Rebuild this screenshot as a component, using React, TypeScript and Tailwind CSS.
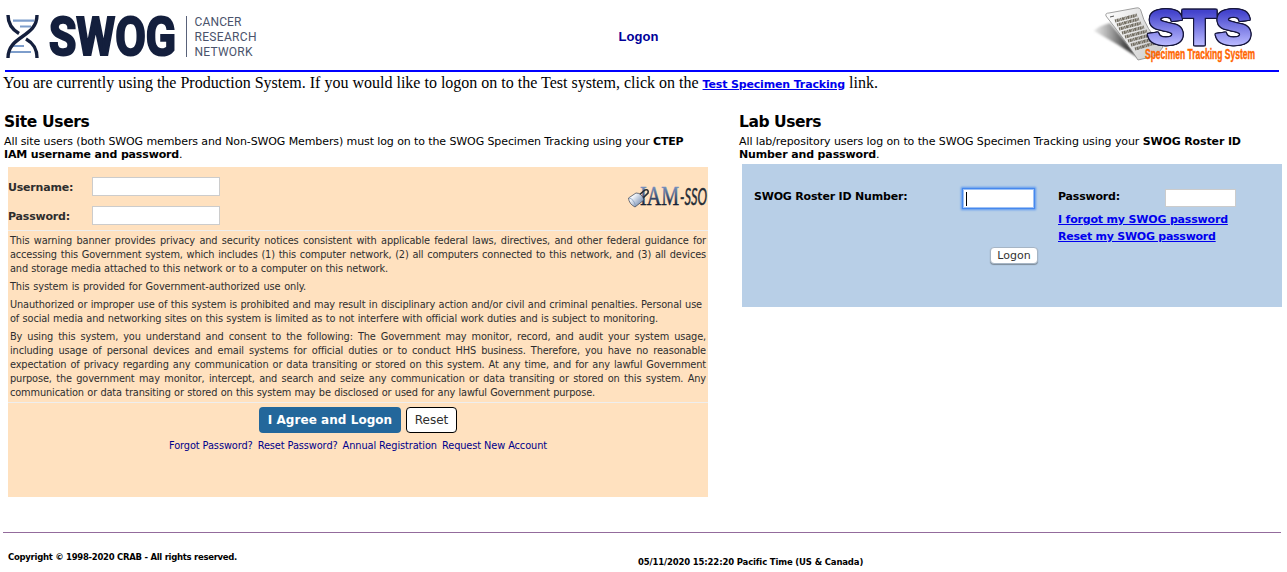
import React from "react";

const verdana = "font-['DejaVu_Sans',sans-serif]";

function SwogLogo() {
  return (
    <svg className="block h-[60px] w-[260px] overflow-visible" viewBox="0 0 260 60" role="img" aria-label="SWOG Cancer Research Network">
      <g stroke="#7d9dcb" strokeWidth="2.2">
        <path d="M13 20.7H34M20 26.5H31M12 46H24M9 52H31" />
      </g>
      <g fill="none" stroke="#141f3d" strokeWidth="3.4">
        <path d="M37 15C37 38 8 35 8 58" />
        <path d="M8 15C8 25 13 30 19 33.5M26 39C33 43 37 48 37 58" />
      </g>
      <text x="49" y="55.3" textLength="127" lengthAdjust="spacingAndGlyphs" fill="#141f3d" stroke="#141f3d" strokeWidth="2.2" className="font-['Roboto',sans-serif] text-[53px] font-bold">
        SWOG
      </text>
      <path d="M186.5 16V57" stroke="#59627a" strokeWidth="1" />
      <g fill="#4a536c" className="font-['Roboto',sans-serif] text-[12px]">
        <text x="194.5" y="26" textLength="47">CANCER</text>
        <text x="194.5" y="41" textLength="62">RESEARCH</text>
        <text x="194.5" y="55.5" textLength="58">NETWORK</text>
      </g>
    </svg>
  );
}

function StsLogo() {
  return (
    <svg className="block h-[65px] w-[167px] overflow-visible" viewBox="1090 0 167 65" role="img" aria-label="Specimen Tracking System">
      <defs>
        <linearGradient id="sts" gradientUnits="userSpaceOnUse" x1="0" y1="10" x2="0" y2="45">
          <stop offset="0.05" stopColor="#4343cc" />
          <stop offset="1" stopColor="#b9b9ff" />
        </linearGradient>
        <linearGradient id="paper" x1="0" y1="0" x2="1" y2="0.3">
          <stop offset="0" stopColor="#fff" />
          <stop offset="1" stopColor="#d0d0d0" />
        </linearGradient>
        <linearGradient id="shade" x1="0" y1="0" x2="1" y2="0">
          <stop offset="0" stopColor="#888" stopOpacity="0.2" />
          <stop offset="0.7" stopColor="#444" />
        </linearGradient>
      </defs>
      <path d="M1094 31Q1098 26 1110 23L1140 59Q1118 44 1094 31Z" fill="url(#shade)" className="blur-[1px]" />
      <path d="M1106 16Q1105 13 1109 13L1136 8Q1140 7 1141 11Q1145 28 1163 47L1157 55Q1148 58 1138 60Q1128 44 1106 16Z" fill="url(#paper)" stroke="#888" strokeWidth="0.8" />
      <path d="M1110 17l4-1" stroke="#555" strokeWidth="1" />
      <g stroke="#706b5f" strokeWidth="3.1" strokeDasharray="1.3 0.5 2 0.4 0.8 0.5">
        <path d="M1115 21L1137 15M1117 25L1139 19M1119 29L1141 23M1122 33L1144 27M1125 37L1147 31M1128 41L1150 35M1131 45L1153 39M1135 49L1155 43" />
      </g>
      <text x="1148" y="43.5" textLength="103" lengthAdjust="spacingAndGlyphs" fill="url(#sts)" stroke="url(#sts)" strokeWidth="2.6" className="font-['Liberation_Sans',sans-serif] text-[48px] font-bold [filter:drop-shadow(1px_0_0_#15153c)_drop-shadow(-1px_0_0_#15153c)_drop-shadow(0_1px_0_#15153c)_drop-shadow(0_-1px_0_#15153c)]">STS</text>
      <text x="1145" y="59" textLength="110" lengthAdjust="spacingAndGlyphs" fill="#ff6500" stroke="#ff6500" strokeWidth="0.4" className="font-['Liberation_Sans',sans-serif] text-[14.5px] font-bold">
        Specimen Tracking System
      </text>
    </svg>
  );
}

function IamLogo() {
  return (
    <svg className="block h-[26px] w-[81px] overflow-visible" viewBox="627 184 81 26" role="img" aria-label="IAM-SSO">
      <defs>
        <linearGradient id="iam" gradientUnits="userSpaceOnUse" x1="0" y1="187" x2="0" y2="206">
          <stop offset="0" stopColor="#7790bd" />
          <stop offset="0.5" stopColor="#42557b" />
          <stop offset="1" stopColor="#10192a" />
        </linearGradient>
        <linearGradient id="lock" x1="0" y1="0" x2="1" y2="0.8">
          <stop offset="0.3" stopColor="#f4f7fb" />
          <stop offset="1" stopColor="#637da5" />
        </linearGradient>
      </defs>
      <text x="640" y="205" textLength="39" lengthAdjust="spacingAndGlyphs" fill="url(#iam)" stroke="url(#iam)" strokeWidth="0.5" className="font-['Liberation_Serif',serif] text-[27px]">IAM</text>
      <text x="680" y="205" textLength="27" lengthAdjust="spacingAndGlyphs" fill="#252d37" stroke="#252d37" strokeWidth="0.5" className="font-['Lato',sans-serif] text-[24px] italic">-SSO</text>
      <path d="M638 196L645 190Q649 189 648 193L641 200" fill="none" stroke="#252a32" strokeWidth="1.6" />
      <path d="M628.5 198L636 193Q642 193 644 200L635 207Q629 204 628.5 198Z" fill="url(#lock)" stroke="#303b4d" strokeWidth="0.7" />
      <path d="M629 198Q634 199 635.5 206" fill="none" stroke="#819abd" strokeWidth="0.8" />
    </svg>
  );
}

const warning: { lines: string[]; widths: string[] }[] = [
  {
    lines: [
      "This warning banner provides privacy and security notices consistent with applicable federal laws, directives, and other federal guidance for",
      "accessing this Government system, which includes (1) this computer network, (2) all computers connected to this network, and (3) all devices",
      "and storage media attached to this network or to a computer on this network.",
    ],
    widths: ["w-[696px]", "w-[696px]", "w-[378px]"],
  },
  { lines: ["This system is provided for Government-authorized use only."], widths: ["w-[296px]"] },
  {
    lines: [
      "Unauthorized or improper use of this system is prohibited and may result in disciplinary action and/or civil and criminal penalties. Personal use",
      "of social media and networking sites on this system is limited as to not interfere with official work duties and is subject to monitoring.",
    ],
    widths: ["w-[692px]", "w-[648px]"],
  },
  {
    lines: [
      "By using this system, you understand and consent to the following: The Government may monitor, record, and audit your system usage,",
      "including usage of personal devices and email systems for official duties or to conduct HHS business. Therefore, you have no reasonable",
      "expectation of privacy regarding any communication or data transiting or stored on this system. At any time, and for any lawful Government",
      "purpose, the government may monitor, intercept, and search and seize any communication or data transiting or stored on this system. Any",
      "communication or data transiting or stored on this system may be disclosed or used for any lawful Government purpose.",
    ],
    widths: ["w-[696px]", "w-[696px]", "w-[696px]", "w-[696px]", "w-[585px]"],
  },
];

function SiteUsers() {
  return (
    <section className="w-[704px] shrink-0 pl-1">
      <h2 className="h-[23px] text-[15.5px] leading-[23px] font-bold tracking-[-0.35px]">Site Users</h2>
      <p className="mt-px h-[32px] text-[11px] leading-[13px] whitespace-nowrap">
        <span className="tracking-[-0.1px]">All site users (both SWOG members and Non-SWOG Members) must log on to the SWOG Specimen Tracking using your </span>
        <b className="tracking-[-0.25px]">CTEP</b><br /><b className="tracking-[-0.16px]">IAM username and password</b>.
      </p>
      <div className="ml-1 h-[330px] w-[700px] bg-[#ffe1bf] text-[#2e2e2e]">
        <div className="flex h-[63px] justify-between">
          <div className="pt-[10px] text-[11px] font-bold tracking-[-0.2px]">
            <label className="flex h-[29px] items-start">
              <span className="w-[84px] pt-[3px]">Username:</span>
              <input className="h-[19px] w-[128px] border border-[#ccc] bg-white outline-none" />
            </label>
            <label className="flex h-[20px] items-start">
              <span className="w-[84px] pt-[3px]">Password:</span>
              <input type="password" className="h-[19px] w-[128px] border border-[#ccc] bg-white outline-none" />
            </label>
          </div>
          <div className="pt-[17px]"><IamLogo /></div>
        </div>
        <div className="flex h-[173px] flex-col gap-1 border-y border-[#eee] pt-[3px] pl-[2px] text-[9.8px] leading-[14px] tracking-[-0.14px]">
          {warning.map((p) => (
            <div key={p.lines[0]}>
              {p.lines.map((line, i) => (
                <p key={line} className={`${p.widths[i]} h-[14px] whitespace-nowrap [text-align-last:justify]`}>{line}</p>
              ))}
            </div>
          ))}
        </div>
        <div className="flex justify-center gap-[5px] pt-1">
          <button className="h-[26px] w-[142px] rounded-[4px] bg-[#23679b] text-[12px] font-bold tracking-[0.05px] whitespace-nowrap text-white">I Agree and Logon</button>
          <button className="h-[26px] w-[51px] rounded-[4px] border border-black bg-white text-[12px]">Reset</button>
        </div>
        <nav className="mt-[6px] ml-[161px] flex w-[378px] justify-between text-[9.8px] leading-[14px] tracking-[-0.1px] whitespace-nowrap text-[#00008b]">
          <a>Forgot Password?</a><a>Reset Password?</a><a>Annual Registration</a><a>Request New Account</a>
        </nav>
      </div>
    </section>
  );
}

function LabUsers() {
  return (
    <section className="w-[544px] shrink-0">
      <h2 className="h-[23px] text-[15.5px] leading-[23px] font-bold tracking-[-0.45px]">Lab Users</h2>
      <p className="mt-px h-[29px] text-[11px] leading-[13px] whitespace-nowrap">
        <span className="tracking-[-0.095px]">All lab/repository users log on to the SWOG Specimen Tracking using your </span>
        <b className="tracking-[-0.13px]">SWOG Roster ID<br />Number and password</b>.
      </p>
      <div className="ml-[3px] h-[143px] w-[540px] bg-[#b8cfe7] pt-[24px] pl-[12px] text-[11px] font-bold">
        <div className="flex h-[59px] items-start">
          <label className="w-[210px] pt-[2px] leading-[14px] tracking-[-0.19px]">SWOG Roster ID Number:</label>
          <div className="mt-[2px] flex h-[17px] w-[69px] items-center bg-white pl-[2px] shadow-[0_0_0_1px_#9fc2f5,0_0_0_2px_#4688ee,0_0_2px_3px_#5b98ef]">
            <span className="h-[14px] w-px bg-black" />
          </div>
          <div className="ml-[25px] w-[200px]">
            <div className="flex h-[23px] items-start">
              <label className="w-[107px] pt-[2px] leading-[14px] tracking-[-0.19px]">Password:</label>
              <input type="password" className="mt-px h-[18px] w-[71px] border border-[#ccc] bg-white outline-none" />
            </div>
            <div className="flex flex-col leading-[17px] tracking-[-0.18px] whitespace-nowrap text-[#0000ee]">
              <a className="underline">I forgot my SWOG password</a>
              <a className="tracking-[-0.25px] underline">Reset my SWOG password</a>
            </div>
          </div>
        </div>
        <button className="ml-[236px] h-[17px] w-[48px] rounded-[4px] border border-[#a6b5c5] bg-white pt-px text-[11px] leading-[14px] font-normal text-[#333] shadow-[0_1px_1px_#7d8b99]">Logon</button>
      </div>
    </section>
  );
}

export default function App() {
  return (
    <main className={`h-[572px] w-[1287px] overflow-hidden bg-white text-black ${verdana}`}>
      <header className="mx-[5px] flex h-[72px] w-[1274px] items-start justify-between border-b-2 border-[#0000ff]">
        <div className="-ml-[5px] w-[555px]"><SwogLogo /></div>
        <h1 className="-ml-[2px] pt-[27px] font-['Liberation_Sans',sans-serif] text-[13px] leading-[20px] font-bold tracking-[0.1px] text-[#000099]">Logon</h1>
        <div className="flex w-[555px] justify-end pr-[22px]"><StsLogo /></div>
      </header>
      <p className="h-[39px] pl-[3px] font-['Liberation_Serif',serif] text-[16px] leading-[22px] whitespace-nowrap">
        You are currently using the Production System. If you would like to logon on to the Test system, click on the{" "}
        <a className="font-['DejaVu_Sans',sans-serif] text-[11px] font-bold tracking-[-0.15px] text-[#0000ee] underline">Test Specimen Tracking</a> link.
      </p>
      <div className="flex h-[421px] gap-[35px]"><SiteUsers /><LabUsers /></div>
      <footer className="mr-[6px] ml-[3px] flex border-t border-[#936b9c] text-[8.5px] leading-[12px] font-bold whitespace-nowrap">
        <p className="w-[629px] pt-[18px] pl-[5px] tracking-[-0.28px]">Copyright © 1998-2020 CRAB - All rights reserved.</p>
        <p className="pt-[23px] pl-[6px] tracking-[-0.15px]">05/11/2020 15:22:20 Pacific Time (US &amp; Canada)</p>
      </footer>
    </main>
  );
}
